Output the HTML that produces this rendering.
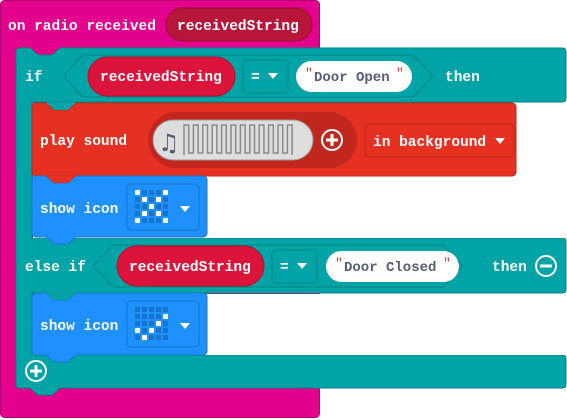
<!DOCTYPE html><html><head><style>
html,body{margin:0;padding:0;background:#fff;width:567px;height:420px;overflow:hidden}
svg{display:block}
text{font-family:"Liberation Mono",monospace;font-weight:bold;font-size:14.5px;fill:#fff}
.q{font-size:13px;font-weight:normal;fill:#c8433a}
.s{font-size:14px;fill:#575e75}
</style></head><body>
<svg width="567" height="420" viewBox="0 0 567 420">
<rect x="0.5" y="0.5" width="319" height="417" rx="4" fill="#e3008c" stroke="#b6006f"/>
<rect x="166" y="8" width="146" height="33" rx="16.5" fill="#b8153a" stroke="#97102f"/>
<text x="8" y="30">on radio received</text>
<text x="177" y="30">receivedString</text>
<path d="M16,52 Q16,48 20,48 H30 L38,55 H52 L60,48 H562 Q566,48 566,52 V98 Q566,102 562,102 H32 V238 H562 Q566,238 566,242 V289 Q566,293 562,293 H32 V355 H562 Q566,355 566,359 V384 Q566,388 562,388 H60 L52,395 H38 L30,388 H20 Q16,388 16,384 Z" fill="#00a4a6" stroke="#008385"/>
<rect x="33" y="103" width="534" height="135" fill="#fff"/>
<rect x="33" y="294" width="534" height="61" fill="#fff"/>
<text x="25" y="81">if</text>
<path d="M63,76 l20,-21 h330 l20,21 l-20,21 h-330 z" fill="#00a4a6" stroke="#008385"/>
<rect x="88" y="57" width="147" height="39" rx="19.5" fill="#dc143c" stroke="#b0102f"/>
<text x="100" y="81">receivedString</text>
<rect x="243" y="60" width="45" height="33" rx="4" fill="#00a4a6" stroke="#008385"/>
<text x="251" y="81">=</text><path d="M268,73 h10 l-5,6 z" fill="#fff"/>
<rect x="296" y="61" width="116" height="31" rx="15.5" fill="#fff"/>
<text x="305" y="77" class="q">"</text>
<text x="314" y="81" class="s">Door Open</text>
<text x="396" y="77" class="q">"</text>
<text x="445" y="81">then</text>
<path d="M32,107 a4,4 0 0 1 4,-4 h10 l8,7 h14 l8,-7 h436 a4,4 0 0 1 4,4 v65 a4,4 0 0 1 -4,4 h-476 a4,4 0 0 1 -4,-4 z" fill="#e63022" stroke="#c0281c"/>
<path d="M46,102 L54,110 H68 L76,102 Z" fill="#00a4a6"/>
<text x="40" y="145">play sound</text>
<rect x="148" y="112" width="209" height="56" rx="28" fill="#c1271d"/>
<rect x="153" y="120" width="160" height="40" rx="20" fill="#dedede" stroke="#999"/>
<text x="158" y="151" style="font-family:'DejaVu Sans';font-size:24px;fill:#575e75">♫</text>
<path d="M184,155 V125 h4.7 V153 h4.7 V125 h4.7 V153 h4.7 V125 h4.7 V153 h4.7 V125 h4.7 V153 h4.7 V125 h4.7 V153 h4.7 V125 h4.7 V153 h4.7 V125 h4.7 V153 h4.7 V125 h4.7 V153 h4.7 V125 h4.7 V153 h4.7 V125 h4.7 V153 h4.7 V125 h4.7 V153 h4.7 V125 h4.7 V155" fill="none" stroke="#8a8a8a" stroke-width="1.5"/>
<circle cx="332" cy="140" r="10" fill="none" stroke="#fff" stroke-width="2"/>
<path d="M326,140 h12 M332,134 v12" stroke="#fff" stroke-width="3"/>
<rect x="365" y="124" width="149" height="33" rx="4" fill="#e63022" stroke="#c0281c"/>
<text x="373" y="146">in background</text><path d="M495,138 h10 l-5,6 z" fill="#fff"/>
<path d="M32,180 a4,4 0 0 1 4,-4 h10 l8,7 h14 l8,-7 h127 a4,4 0 0 1 4,4 v53 a4,4 0 0 1 -4,4 h-127 l-8,7 h-14 l-8,-7 h-10 a4,4 0 0 1 -4,-4 z" fill="#1e90ff" stroke="#1873cc"/>
<path d="M46,176 L54,183 H68 L76,176 Z" fill="#e63022"/>
<text x="40" y="213">show icon</text>
<rect x="127" y="184" width="72" height="46" rx="4" fill="#1e90ff" stroke="#1873cc"/>
<path d="M180,206 h10 l-5,6 z" fill="#fff"/>
<text x="25" y="271">else if</text>
<path d="M93,266 l20,-21 h330 l20,21 l-20,21 h-330 z" fill="#00a4a6" stroke="#008385"/>
<rect x="117" y="246" width="147" height="40" rx="20" fill="#dc143c" stroke="#b0102f"/>
<text x="129" y="271">receivedString</text>
<rect x="272" y="250" width="45" height="33" rx="4" fill="#00a4a6" stroke="#008385"/>
<text x="280" y="271">=</text><path d="M297,263 h10 l-5,6 z" fill="#fff"/>
<rect x="326" y="251" width="133" height="31" rx="15.5" fill="#fff"/>
<text x="335" y="267" class="q">"</text>
<text x="344" y="271" class="s">Door Closed</text>
<text x="443" y="267" class="q">"</text>
<text x="492" y="271">then</text>
<circle cx="546" cy="266" r="10" fill="none" stroke="#fff" stroke-width="2"/>
<path d="M540,266 h12" stroke="#fff" stroke-width="3"/>
<path d="M32,297 a4,4 0 0 1 4,-4 h10 l8,7 h14 l8,-7 h127 a4,4 0 0 1 4,4 v54 a4,4 0 0 1 -4,4 h-127 l-8,7 h-14 l-8,-7 h-10 a4,4 0 0 1 -4,-4 z" fill="#1e90ff" stroke="#1873cc"/>
<path d="M46,293 L54,300 H68 L76,293 Z" fill="#00a4a6"/>
<text x="40" y="330">show icon</text>
<rect x="127" y="301" width="72" height="46" rx="4" fill="#1e90ff" stroke="#1873cc"/>
<path d="M180,323 h10 l-5,6 z" fill="#fff"/>
<circle cx="36" cy="371" r="10" fill="none" stroke="#fff" stroke-width="2"/>
<path d="M30,371 h12 M36,365 v12" stroke="#fff" stroke-width="3"/>
<g fill="#1873cc">
<rect x="135" y="190" width="5" height="5" fill="#fff"/><rect x="142" y="190" width="5" height="5"/><rect x="149" y="190" width="5" height="5"/><rect x="156" y="190" width="5" height="5"/><rect x="163" y="190" width="5" height="5" fill="#fff"/>
<rect x="135" y="197" width="5" height="5"/><rect x="142" y="197" width="5" height="5" fill="#fff"/><rect x="149" y="197" width="5" height="5"/><rect x="156" y="197" width="5" height="5" fill="#fff"/><rect x="163" y="197" width="5" height="5"/>
<rect x="135" y="204" width="5" height="5"/><rect x="142" y="204" width="5" height="5"/><rect x="149" y="204" width="5" height="5" fill="#fff"/><rect x="156" y="204" width="5" height="5"/><rect x="163" y="204" width="5" height="5"/>
<rect x="135" y="211" width="5" height="5"/><rect x="142" y="211" width="5" height="5" fill="#fff"/><rect x="149" y="211" width="5" height="5"/><rect x="156" y="211" width="5" height="5" fill="#fff"/><rect x="163" y="211" width="5" height="5"/>
<rect x="135" y="218" width="5" height="5" fill="#fff"/><rect x="142" y="218" width="5" height="5"/><rect x="149" y="218" width="5" height="5"/><rect x="156" y="218" width="5" height="5"/><rect x="163" y="218" width="5" height="5" fill="#fff"/>
<rect x="135" y="307" width="5" height="5"/><rect x="142" y="307" width="5" height="5"/><rect x="149" y="307" width="5" height="5"/><rect x="156" y="307" width="5" height="5"/><rect x="163" y="307" width="5" height="5"/>
<rect x="135" y="314" width="5" height="5"/><rect x="142" y="314" width="5" height="5"/><rect x="149" y="314" width="5" height="5"/><rect x="156" y="314" width="5" height="5"/><rect x="163" y="314" width="5" height="5" fill="#fff"/>
<rect x="135" y="321" width="5" height="5"/><rect x="142" y="321" width="5" height="5"/><rect x="149" y="321" width="5" height="5"/><rect x="156" y="321" width="5" height="5" fill="#fff"/><rect x="163" y="321" width="5" height="5"/>
<rect x="135" y="328" width="5" height="5" fill="#fff"/><rect x="142" y="328" width="5" height="5"/><rect x="149" y="328" width="5" height="5" fill="#fff"/><rect x="156" y="328" width="5" height="5"/><rect x="163" y="328" width="5" height="5"/>
<rect x="135" y="335" width="5" height="5"/><rect x="142" y="335" width="5" height="5" fill="#fff"/><rect x="149" y="335" width="5" height="5"/><rect x="156" y="335" width="5" height="5"/><rect x="163" y="335" width="5" height="5"/>
</g>
</svg>
</body></html>
